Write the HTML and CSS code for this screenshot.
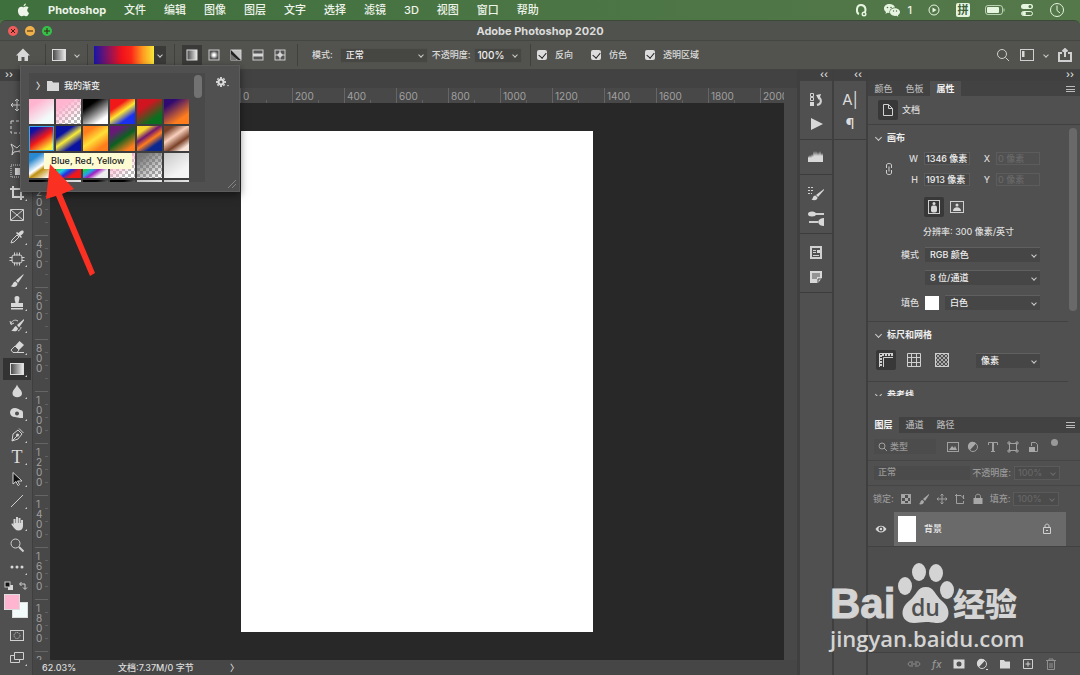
FILE: index.html
```html
<!DOCTYPE html>
<html lang="zh-CN">
<head>
  <meta charset="UTF-8" />
  <meta name="viewport" content="width=device-width, initial-scale=1.0" />
  <title>Adobe Photoshop 2020</title>
  <link rel="stylesheet" href="styles.css">
</head>
<body>
  <!-- macOS menu bar -->
  <nav class="menubar">
    <svg class="apple" viewBox="0 0 14 16"><path d="M9.600 0.500c0.100 1.300-1.100 2.900-2.500 2.900C6.900 2.100 8.200 0.700 9.600 0.500zM7.200 4.500C7.800 4.500 8.700 3.700 10 3.800c1.100 0 2 0.600 2.500 1.300-2.200 1.400-1.800 4.500 0.500 5.500-0.500 1.400-1.700 3.600-3 3.600-1 0-1.400-0.600-2.600-0.600s-1.600 0.600-2.500 0.600C3 14.300 1 11.300 1 8.300c0-2.900 1.900-4.400 3.600-4.400 1.100 0 2 0.600 2.600 0.600z"/></svg>
    <a class="app-name" href="#">Photoshop</a>
    <a href="#">文件</a>
    <a href="#">编辑</a>
    <a href="#">图像</a>
    <a href="#">图层</a>
    <a href="#">文字</a>
    <a href="#">选择</a>
    <a href="#">滤镜</a>
    <a href="#">3D</a>
    <a href="#">视图</a>
    <a href="#">窗口</a>
    <a href="#">帮助</a>
    <div class="status-icons">
      <svg width="14" height="14" viewBox="0 0 14 14"><path class="line thick" d="M5 11C2 10 2 2 7 2s5.500 6 3 8.500"/><circle class="fill" cx="10" cy="11" r="2.500"/><circle cx="10" cy="11" r="1" fill="#4d7445"/></svg>
      <span class="wechat">
        <svg width="18" height="14" viewBox="0 0 18 14"><path class="fill" d="M6.500 1C3.200 1 1 3 1 5.500 1 7 1.800 8.200 3 9l-0.500 1.800L4.700 9.700l1.800 0.200C6 7 8.500 4.500 12 4.500 11.500 2.500 9.300 1 6.500 1z"/><path class="fill" d="M12 5.200c-2.700 0-5 1.700-5 3.900s2.300 3.900 5 3.900l1.500-0.200 1.800 1-0.400-1.600c1.300-0.700 2.100-1.800 2.100-3.100 0-2.200-2.300-3.900-5-3.900z"/><g fill="#4d7445"><circle cx="4.500" cy="4.500" r="0.800"/><circle cx="8" cy="4.500" r="0.800"/><circle cx="10.500" cy="8" r="0.700"/><circle cx="13.500" cy="8" r="0.700"/></g></svg>
        1
      </span>
      <svg width="14" height="14" viewBox="0 0 14 14"><circle class="line" cx="7" cy="7" r="5"/><path class="fill" d="M5.500 4.500v5l4-2.500z"/></svg>
      <span class="ime">拼</span>
      <svg width="20" height="14" viewBox="0 0 20 14"><rect class="line dim" x="0.500" y="2.500" width="17" height="9" rx="2.500"/><rect class="fill" x="2" y="4" width="12" height="6" rx="1"/><path class="line dim" d="M19 5.500v3"/></svg>
      <svg width="14" height="14" viewBox="0 0 14 14"><rect class="fill" x="1" y="1" width="12" height="5" rx="2.500"/><rect class="line" x="1.500" y="8.500" width="11" height="4" rx="2"/><circle cx="10" cy="3.500" r="1.500" fill="#4d7445"/><circle class="fill" cx="4" cy="10.500" r="2"/></svg>
      <svg width="16" height="16" viewBox="0 0 16 16"><circle class="line" cx="8" cy="8" r="6.500"/><path class="line" d="M8 3.500V8.500L11 11"/></svg>
    </div>
  </nav>

  <div class="window">
    <header class="titlebar">
      <div class="lights">
        <button class="light red" aria-label="关闭"><svg viewBox="0 0 10 10"><path d="M3 3l4 4M7 3l-4 4"/></svg></button>
        <button class="light amber" aria-label="最小化"><svg viewBox="0 0 10 10"><path d="M2 5h6"/></svg></button>
        <button class="light green" aria-label="缩放"><svg viewBox="0 0 10 10"><path d="M2 5h6M5 2v6"/></svg></button>
      </div>
      <h1>Adobe Photoshop 2020</h1>
    </header>

    <!-- Options bar -->
    <div class="options">
      <button class="home" aria-label="主页"><svg width="16" height="14" viewBox="0 0 16 14"><path class="fill" d="M8 0.500L1 7.500h2V13h3.500V9h3v4H13V7.500h2z"/></svg></button>
      <div class="opt-group tool-preset">
        <svg width="14" height="12" viewBox="0 0 14 12"><defs><linearGradient id="gr"><stop offset="0" stop-color="#444"/><stop offset="1" stop-color="#eee"/></linearGradient></defs><rect x="0.500" y="0.500" width="13" height="11" fill="url(#gr)" stroke="#ddd"/></svg>
        <i class="chev"></i>
      </div>
      <div class="opt-group ramp-group">
        <button class="ramp" aria-label="渐变"></button>
        <button class="ramp-arrow" aria-label="渐变拾色器"><i class="chev"></i></button>
      </div>
      <div class="opt-group styles">
        <button class="active" aria-label="线性"><svg width="12" height="12" viewBox="0 0 12 12"><rect x="1" y="1" width="10" height="10" fill="url(#gr)" stroke="#ddd"/></svg></button>
        <button aria-label="径向"><svg width="12" height="12" viewBox="0 0 12 12"><defs><radialGradient id="rad"><stop offset="0.200" stop-color="#fff"/><stop offset="0.800" stop-color="#555"/></radialGradient></defs><rect x="1" y="1" width="10" height="10" fill="url(#rad)" stroke="#ccc"/></svg></button>
        <button aria-label="角度"><svg width="12" height="12" viewBox="0 0 12 12"><rect x="1" y="1" width="10" height="10" fill="#888" stroke="#ccc"/><path d="M1 1l5 5v5H1z" fill="#777"/><path d="M1 1l10 10H8L1 5z" fill="#222"/><path class="fill" d="M1 1l10 10V1z" opacity="0.700"/></svg></button>
        <button aria-label="对称"><svg width="12" height="12" viewBox="0 0 12 12"><rect x="1" y="1" width="10" height="10" fill="#555" stroke="#ccc"/><path class="fill" d="M1 4.500h10v3H1z"/></svg></button>
        <button aria-label="菱形"><svg width="12" height="12" viewBox="0 0 12 12"><rect x="1" y="1" width="10" height="10" fill="#555" stroke="#ccc"/><path class="fill" d="M6 3l3 3-3 3-3-3z"/><path class="line" d="M6 1v10M1 6h10"/></svg></button>
      </div>
      <div class="opt-group blend">
        <label for="blend">模式:</label>
        <span class="select w88"><select id="blend"><option>正常</option></select><i class="chev"></i></span>
        <label for="opacity">不透明度:</label>
        <span class="select w46"><input id="opacity" type="text" value="100%"><i class="chev"></i></span>
      </div>
      <div class="opt-group checks">
        <label><input type="checkbox" checked>反向</label>
        <label><input type="checkbox" checked>仿色</label>
        <label><input type="checkbox" checked>透明区域</label>
      </div>
      <div class="opt-right">
        <svg width="14" height="14" viewBox="0 0 14 14"><circle class="line" cx="6" cy="6" r="4.500"/><path class="line" d="M9.500 9.500L13 13"/></svg>
        <svg width="14" height="12" viewBox="0 0 14 12"><rect class="line" x="0.500" y="0.500" width="13" height="11"/><path class="fill" d="M2 2h2.500v6H2z"/></svg>
        <i class="chev"></i>
        <svg width="14" height="14" viewBox="0 0 14 14"><path class="line thick" d="M4 5H1v8h12V5h-3M7 9V1.500M4.500 3.500L7 1l2.500 2.500"/></svg>
      </div>
    </div>

    <main class="workspace">
      <aside class="toolbar">
        <div class="strip left">››</div>
        <div class="tools">
          <button class="tool" aria-label="移动"><svg viewBox="0 0 16 16"><path class="line" d="M8 2v12M2 8h12M6 4l2-2 2 2M6 12l2 2 2-2M4 6L2 8l2 2M12 6l2 2-2 2"/></svg></button>
          <button class="tool" aria-label="选框"><svg viewBox="0 0 16 16"><rect class="line" x="2" y="2" width="12" height="12" stroke-dasharray="3 2"/></svg></button>
          <button class="tool" aria-label="套索"><svg viewBox="0 0 16 16"><path class="line" d="M2 3l6 4 5-5-2 8-6 1-2 3 1-6zM9 10l5 3"/></svg></button>
          <button class="tool" aria-label="对象选择"><svg viewBox="0 0 16 16"><rect class="line" x="2" y="2" width="12" height="12" stroke-dasharray="1 1"/><rect class="fill" x="6" y="5" width="7" height="7"/></svg></button>
          <button class="tool" aria-label="裁剪"><svg viewBox="0 0 16 16"><path class="line thick" d="M4 1v11h11M1 4h11v11"/></svg></button>
          <button class="tool plain" aria-label="图框"><svg viewBox="0 0 16 16"><path class="line" d="M1.500 2.500h13v11h-13zM2 3l12 10M14 3L2 13"/></svg></button>
          <button class="tool" aria-label="吸管"><svg viewBox="0 0 16 16"><path class="line" d="M2 14l1-3 5-5 2 2-5 5z"/><path class="fill" d="M7 4l5 5 1-1-1.500-1.500C16 4 15 1 13 1.500c-1 0-2 1-3.500 2.500L8 3z"/></svg></button>
          <button class="tool" aria-label="修复"><svg viewBox="0 0 16 16"><rect class="line" x="3" y="4" width="10" height="8" rx="2"/><path class="line" d="M5.500 1.500v3M8 1.500v3M10.500 1.500v3M5.500 11.500v3M8 11.500v3M10.500 11.500v3M0.500 6.500h3M0.500 9.500h3M12.500 6.500h3M12.500 9.500h3"/></svg></button>
          <button class="tool" aria-label="画笔"><svg viewBox="0 0 16 16"><path class="fill" d="M14.500 1L7 7.500 9 10l5.500-8zM6.500 8.500c-3 0-2 4-5 4.500 3 2 7 1 7-2.500z"/></svg></button>
          <button class="tool" aria-label="图章"><svg viewBox="0 0 16 16"><path class="fill" d="M8 1C4 1 6 5 6.500 8H2v4h12V8H9.500C10 5 12 1 8 1zM2 13h12v1.500H2z"/></svg></button>
          <button class="tool" aria-label="历史画笔"><svg viewBox="0 0 16 16"><path class="fill" d="M15 2L8 8l2 2.500 5-7zM7 9c-2 0-2 4-5 4.500 3 1.500 6.500 1 7-2z"/><path class="line" d="M2 7c0-3 4-5 7-3M1 4l1 3.500L5 6M12 10c0 2-1 3-3 4"/></svg></button>
          <button class="tool" aria-label="橡皮擦"><svg viewBox="0 0 16 16"><path class="line" d="M2 11l4-4 4 4-2 2.500H4z"/><path class="fill" d="M6 7l4.500-5L15 6l-5 5zM8 13h7v1H8z"/></svg></button>
          <button class="tool active" aria-label="渐变"><svg viewBox="0 0 16 16"><rect x="1.500" y="2.500" width="13" height="11" fill="url(#gr)" stroke="#ddd"/></svg></button>
          <button class="tool" aria-label="模糊"><svg viewBox="0 0 16 16"><path class="fill" d="M8 1.500C7 5 3.500 7 3.500 10.500 3.500 15.500 13 15.500 13 10.500 13 7 9 5 8 1.500z"/></svg></button>
          <button class="tool" aria-label="减淡"><svg viewBox="0 0 16 16"><path class="fill" fill-rule="evenodd" d="M6 3c-3 0-5 2-5 4.500S3 12 6 12l5 1h3V8c0-2-1-3-3-3C10 4 8 3 6 3zM8 6.500a2 2 0 1 1 0 4 2 2 0 0 1 0-4z"/></svg></button>
          <button class="tool" aria-label="钢笔"><svg viewBox="0 0 16 16"><path class="line" d="M3 14l1-7 5-4 4 4-4 5zM3 14l5-5M10 1.500L14.500 6"/><circle class="fill" cx="8.500" cy="8" r="1.500"/></svg></button>
          <button class="tool" aria-label="文字"><span class="type">T</span></button>
          <button class="tool" aria-label="路径选择"><svg viewBox="0 0 16 16"><path d="M4 1.500v11.500l3-2.500 2 4 1.500-1-2-3.500H13z" fill="#111" stroke="#d4d4d4"/></svg></button>
          <button class="tool" aria-label="直线"><svg viewBox="0 0 16 16"><path class="line" d="M2 14L14 2"/></svg></button>
          <button class="tool" aria-label="抓手"><svg viewBox="0 0 16 16"><path class="line thick" d="M5.500 9V4M8 8V2M10.500 8V3M13 9V5"/><path class="fill" d="M4.500 8H14v3c0 3-2 4.500-4.500 4.500-3 0-4-2-7-6C2 8 4 8 5 10z"/></svg></button>
          <button class="tool plain" aria-label="缩放"><svg viewBox="0 0 16 16"><circle class="line" cx="6.500" cy="6.500" r="4.500"/><path class="line thick" d="M10 10L14.500 14.500"/></svg></button>
          <button class="tool" aria-label="更多"><svg viewBox="0 0 16 16"><g class="fill"><circle cx="3" cy="8" r="1.500"/><circle cx="8" cy="8" r="1.500"/><circle cx="13" cy="8" r="1.500"/></g></svg></button>
        </div>
        <div class="mini">
          <svg width="10" height="10" viewBox="0 0 10 10"><rect class="fill" x="4" y="4" width="5" height="5"/><rect x="1" y="1" width="5" height="5" fill="#111" stroke="#ccc"/></svg>
          <svg width="10" height="10" viewBox="0 0 10 10"><path class="line" d="M2 3h5v5M3.500 1L1.500 3l2 2M5 6.500l2 2 2-2"/></svg>
        </div>
        <div class="colors"><button class="fg" aria-label="前景色"></button><button class="bg" aria-label="背景色"></button></div>
        <button class="tool plain" aria-label="快速蒙版"><svg viewBox="0 0 16 16"><rect class="line" x="1.500" y="2.500" width="13" height="10"/><circle class="line" cx="8" cy="7.500" r="3" stroke-dasharray="1 1"/></svg></button>
        <button class="tool" aria-label="屏幕模式"><svg viewBox="0 0 16 16"><path class="line" d="M5.500 2.500h9v7h-9zM5.500 5.500h-4v7h9v-3"/></svg></button>
      </aside>

      <section class="document">
        <div class="doc-strip"></div>
        <div class="ruler-h">
          <span>0</span><span>200</span><span>400</span><span>600</span><span>800</span><span>1000</span><span>1200</span><span>1400</span><span>1600</span><span>1800</span><span>2000</span>
        </div>
        <div class="ruler-v">
          <span>0</span><span>200</span><span>400</span><span>600</span><span>800</span><span>1000</span><span>1200</span><span>1400</span><span>1600</span><span>1800</span><span>2000</span>
        </div>
        <div class="canvas"><div class="artboard"></div></div>
        <footer class="statusbar"><span class="zoom">62.03%</span><span class="doc-info">文档:7.37M/0 字节</span><span class="more">〉</span></footer>
      </section>

      <aside class="dock">
        <div class="strip">‹‹</div>
        <div class="dock-group">
          <button aria-label="历史记录"><svg viewBox="0 0 16 16"><path class="line" d="M2.500 1.500h3v3h-3zM2.500 5.500h3v3h-3z"/><path class="fill" d="M2 10h4v4H2z"/><path class="line thick" d="M9 13c5-1 5-6 1-8"/><path class="fill" d="M8 3l5-1-2 6z"/></svg></button>
          <button aria-label="动作"><svg viewBox="0 0 16 16"><path class="fill" d="M3 2l12 6-12 6z"/></svg></button>
        </div>
        <div class="dock-group one">
          <button aria-label="直方图"><svg viewBox="0 0 16 16"><path class="fill" d="M0 13V7l1 2 1-3 1 3 1-4 1 3 1-6 1 5 1-5 1 5 1-4 1 4 1-5 1 5 1-3 1 3V13z"/></svg></button>
        </div>
        <div class="dock-group">
          <button aria-label="画笔设置"><svg viewBox="0 0 16 16"><path class="line" d="M0 1.500h6M0 4.500h6M0 7.500h4" stroke-dasharray="2 1"/><path class="fill" d="M16 3L8 9l2 2 6-7zM7.500 9.500c-3 0-2 3-4 4 3 1.500 6 0.500 6-2z"/></svg></button>
          <button aria-label="画笔"><svg viewBox="0 0 16 16"><path class="line thick" d="M7 4h9M1 12h9"/><ellipse class="fill" cx="4" cy="4" rx="4" ry="2.500"/><path class="fill" d="M10 12c1-3 3-4 6-4v8c-3 0-5-1-6-4z"/></svg></button>
        </div>
        <div class="dock-group">
          <button aria-label="库"><svg viewBox="0 0 16 16"><rect class="line thick" x="3" y="2" width="10" height="11"/><path class="line" d="M5 5.500h3M5 7.500h3M5 10.500h6"/><path class="fill" d="M9 5h3v3H9z"/></svg></button>
          <button aria-label="注释"><svg viewBox="0 0 16 16"><path class="fill" d="M2 2h12v7l-4 5H2z"/><path d="M4 5h8M4 7h8M4 9h5M10 14V10h4" stroke="#505050" fill="none"/></svg></button>
        </div>
      </aside>
      <aside class="dock">
        <div class="strip">‹‹</div>
        <div class="dock-group">
          <button class="glyph" aria-label="字符">A|</button>
          <button class="glyph" aria-label="段落">¶</button>
        </div>
      </aside>

      <aside class="panels">
        <div class="strip">››</div>
        <div class="tabs">
          <button>颜色</button><button>色板</button><button class="active">属性</button>
          <i class="burger"></i>
        </div>
        <div class="prop-head">
          <span class="icon-btn on"><svg width="12" height="14" viewBox="0 0 12 14"><path class="line" d="M1.500 1.500h5l4 4v7h-9zM6.500 1.500v4h4"/></svg></span>
          文档
        </div>
        <div class="prop-body">
          <section class="section">
            <h2><i class="chev"></i>画布</h2>
            <div class="size">
              <svg class="chain" width="8" height="14" viewBox="0 0 8 14"><path class="line" d="M1.500 6V3c0-2 5-2 5 0v3M1.500 8v3c0 2 5 2 5 0V8M4 4.500v5"/></svg>
              <label for="w">W</label><input id="w" type="text" value="1346 像素">
              <label for="x">X</label><input id="x" type="text" value="0 像素" disabled>
              <label for="h">H</label><input id="h" type="text" value="1913 像素">
              <label for="y">Y</label><input id="y" type="text" value="0 像素" disabled>
            </div>
            <div class="orient">
              <button class="icon-btn on" aria-label="纵向"><svg width="14" height="16" viewBox="0 0 14 16"><rect class="line" x="1.500" y="1.500" width="11" height="13"/><circle class="fill" cx="7" cy="4.500" r="1.500"/><rect class="fill" x="4" y="6.500" width="6" height="7" rx="2"/></svg></button>
              <button class="icon-btn" aria-label="横向"><svg width="14" height="12" viewBox="0 0 14 12"><rect class="line" x="0.500" y="0.500" width="13" height="11"/><circle class="fill" cx="7" cy="4" r="1.500"/><path class="fill" d="M3 10c0-5 8-5 8 0z"/></svg></button>
            </div>
            <p class="res">分辨率: 300 像素/英寸</p>
            <div class="field"><label for="mode">模式</label><span class="select"><select id="mode"><option>RGB 颜色</option></select><i class="chev"></i></span></div>
            <div class="field"><label for="depth"></label><span class="select"><select id="depth"><option>8 位/通道</option></select><i class="chev"></i></span></div>
            <div class="field last"><label for="fill">填色</label><i class="chip"></i><span class="select"><select id="fill"><option>白色</option></select><i class="chev"></i></span></div>
          </section>
          <section class="section">
            <h2><i class="chev"></i>标尺和网格</h2>
            <div class="grid-row">
              <button class="icon-btn on" aria-label="标尺"><svg width="14" height="14" viewBox="0 0 14 14"><path class="line thick" d="M2 13V2h12" stroke-dasharray="2 1"/><path class="line" d="M0.500 14V0.500H14M4.500 14V4.500H14"/></svg></button>
              <button class="icon-btn" aria-label="网格"><svg width="14" height="14" viewBox="0 0 14 14"><path class="line" d="M0.500 0.500h13v13H0.500zM4.500 0v14M9.500 0v14M0 4.500h14M0 9.500h14"/></svg></button>
              <button class="icon-btn" aria-label="透明"><svg width="14" height="14" viewBox="0 0 14 14"><path class="line dim" d="M1 5l4-4M1 9l8-8M1 13L13 1M5 13l8-8M9 13l4-4M9 1l4 4M5 1l8 8M1 1l12 12M1 5l8 8M1 9l4 4"/><rect class="line" x="0.500" y="0.500" width="13" height="13"/></svg></button>
              <span class="select w64"><select aria-label="单位"><option>像素</option></select><i class="chev"></i></span>
            </div>
          </section>
          <section class="section">
            <h2><i class="chev"></i>参考线</h2>
          </section>
          <i class="scroll-thumb"></i>
        </div>

        <div class="tabs layer-tabs">
          <button class="active">图层</button><button>通道</button><button>路径</button>
          <i class="burger"></i>
        </div>
        <div class="layer-row">
          <span class="search"><svg width="10" height="10" viewBox="0 0 10 10"><circle class="line" cx="4" cy="4" r="3"/><path class="line" d="M6 6l3 3"/></svg>类型</span>
          <div class="filters">
            <svg width="12" height="12" viewBox="0 0 12 12"><rect class="line" x="0.500" y="1.500" width="11" height="9"/><path class="fill" d="M2 9l3-4 2 2 1-2 2 4z"/></svg>
            <svg width="12" height="12" viewBox="0 0 12 12"><circle class="line" cx="6" cy="6" r="4.500"/><path class="fill" d="M9 2.500A4.500 4.500 0 1 0 3 9z"/></svg>
            <svg width="12" height="12" viewBox="0 0 12 12"><path class="line" d="M1.500 4V1.500h9V4M4 10.500h4"/><path class="line thick" d="M6 1.500v9"/></svg>
            <svg width="12" height="12" viewBox="0 0 12 12"><rect class="line" x="2.500" y="2.500" width="7" height="7"/><path class="line" d="M1 1h2v2H1zM9 1h2v2H9zM1 9h2v2H1zM9 9h2v2H9z"/></svg>
            <svg width="12" height="12" viewBox="0 0 12 12"><path class="line" d="M4.500 5V1.500h4l2 2v7H8"/><path class="fill" d="M2 6h6v5H2z"/></svg>
          </div>
          <i class="dot"></i>
        </div>
        <div class="layer-row">
          <span class="dim-field grow">正常</span><span>不透明度:</span><span class="dim-field pct">100%<i class="chev"></i></span>
        </div>
        <div class="layer-row locks">
          <span>锁定:</span>
          <svg width="12" height="12" viewBox="0 0 12 12"><rect class="line" x="1.500" y="1.500" width="9" height="9"/><path class="fill" d="M2 2h3v3H2zM8 2h2v3H8zM5 5h3v3H5zM2 8h3v2H2zM8 8h2v2H8z"/></svg>
          <svg width="12" height="12" viewBox="0 0 12 12"><path class="fill" d="M11 1L5 6l2 2 4-6zM4.500 7C2 7 3 10 1 11c2 1 5 0 5-2.500z"/></svg>
          <svg width="12" height="12" viewBox="0 0 12 12"><path class="line" d="M6 1v10M1 6h10M4.500 2.500L6 1l1.500 1.500M4.500 9.500L6 11l1.500-1.500M2.500 4.500L1 6l1.500 1.500M9.500 4.500L11 6 9.500 7.500"/></svg>
          <svg width="12" height="12" viewBox="0 0 12 12"><path class="line" d="M2.500 1v9.500h7V8M1 2.500h6l3 3M9.500 2v4"/></svg>
          <svg width="12" height="12" viewBox="0 0 12 12"><path class="fill" d="M1.500 5h9v6h-9z"/><path class="line" d="M3.500 5V3.500c0-3 5-3 5 0V5"/></svg>
          <span>填充:</span><span class="dim-field pct">100%<i class="chev"></i></span>
        </div>
        <div class="layer">
          <svg class="eye" width="12" height="10" viewBox="0 0 12 10"><path class="fill" fill-rule="evenodd" d="M0.500 5C3 0.500 9 0.500 11.500 5 9 9.500 3 9.500 0.500 5zM6 2.500a2.500 2.500 0 1 0 0 5 2.500 2.500 0 0 0 0-5z"/><circle class="fill" cx="6" cy="5" r="1.200"/></svg>
          <div class="layer-main">
            <i class="thumb"></i>背景
            <svg class="lock" width="10" height="12" viewBox="0 0 10 12"><path class="line" d="M1.500 4.500h7v6h-7zM3 4.500V3c0-2.500 4-2.500 4 0v1.500M4 7.500h2"/></svg>
          </div>
        </div>
        <div class="layer-empty"></div>
        <div class="layer-foot">
          <svg class="off" width="14" height="12" viewBox="0 0 14 12"><path class="line" d="M6 4H3.500c-3 0-3 4 0 4H6M8 4h2.500c3 0 3 4 0 4H8M4 6h6"/></svg>
          <em class="off">fx</em>
          <svg width="12" height="12" viewBox="0 0 12 12"><path class="fill" fill-rule="evenodd" d="M0.500 1.500h11v9H0.500zM6 3.500a2.500 2.500 0 1 0 0 5 2.500 2.500 0 0 0 0-5z"/></svg>
          <svg width="12" height="12" viewBox="0 0 12 12"><circle class="line" cx="6" cy="6" r="4.500"/><path class="fill" d="M9 2.500A4.500 4.500 0 1 0 3 9zM10 11h2v1h-2z"/></svg>
          <svg width="12" height="12" viewBox="0 0 12 12"><path class="fill" d="M1 2h4l1 1.500h5v7H1z"/></svg>
          <svg width="12" height="12" viewBox="0 0 12 12"><path class="line" d="M1.500 1.500h9v9h-9zM6 3.500v5M3.500 6h5"/></svg>
          <svg class="off" width="12" height="12" viewBox="0 0 12 12"><path class="line" d="M1 2.500h10M4 2V1h4v1M2.500 3v8.500h7V3M5 5v5M7 5v5"/></svg>
        </div>
      </aside>
    </main>
  </div>

  <!-- Gradient picker -->
  <div class="picker">
    <div class="picker-list">
      <div class="folder">
        <span class="caret">〉</span>
        <svg width="12" height="10" viewBox="0 0 12 10"><path class="fill" d="M0 0h5l1 1.500h6V10H0z"/></svg>
        我的渐变
      </div>
      <div class="swatches">
        <button class="g1"></button><button class="g2"></button><button class="g3"></button><button class="g4"></button><button class="g5"></button><button class="g6"></button>
        <button class="g7 chosen"></button><button class="g8"></button><button class="g9"></button><button class="g10"></button><button class="g11"></button><button class="g12"></button>
        <button class="g13"></button><button class="g14"></button><button class="g15"></button><button class="g2"></button><button class="g16"></button><button class="g17"></button>
        <button class="g3"></button><button class="g17"></button><button class="g3"></button><button class="g3"></button><button class="g17"></button><button class="g17"></button>
      </div>
      <i class="picker-thumb"></i>
    </div>
    <button class="gear" aria-label="设置"><svg width="14" height="12" viewBox="0 0 14 12"><circle cx="6" cy="6" r="2.500" fill="none" stroke="#ddd" stroke-width="2"/><path class="line thick" d="M6 1v2M6 9v2M1 6h2M9 6h2M2.500 2.500l1 1M8.500 8.500l1 1M9.500 2.500l-1 1M3.500 8.500l-1 1"/><path class="fill" d="M12 9h2l-1 1.500z"/></svg></button>
    <svg class="grip" width="10" height="10" viewBox="0 0 10 10"><path class="line" d="M1 9l8-8M5 9l4-4"/></svg>
    <div class="tooltip">Blue, Red, Yellow</div>
    <svg class="pointer" width="50" height="112" viewBox="0 0 50 112"><path d="M4 0L28 25 16 30 49 109 44 112 10 32 0 35z" fill="#fa3022"/></svg>
  </div>

  <div class="watermark">
    <div class="brand">
      <span class="bai">Bai</span>
      <span class="paw">
        <svg width="58" height="62" viewBox="0 0 58 62"><ellipse cx="8" cy="24" rx="7" ry="9"/><ellipse cx="22" cy="10" rx="7" ry="9"/><ellipse cx="39" cy="11" rx="7" ry="9"/><ellipse cx="50" cy="28" rx="7" ry="9"/><path d="M29 25c8 0 9 8 16 14 11 9 7 22-4 22-6 0-7-1-12-1s-7 1-12 1C5 61 1 48 12 39c8-6 8-14 17-14z"/></svg>
        <b>du</b>
      </span>
      <span class="jy">经验</span>
    </div>
    <div class="url">jingyan.baidu.com</div>
  </div>
</body>
</html>
```
FILE: styles.css
```css
* { margin: 0; padding: 0; box-sizing: border-box; }

body {
  height: 100vh;
  display: flex;
  flex-direction: column;
  overflow: hidden;
  position: relative;
  background: #4d7445;
  color: #dcdcdc;
  font: 500 9px/12px Inter, "Noto Sans CJK SC", sans-serif;
}

button, input, select {
  font: inherit;
  color: inherit;
  background: none;
  border: none;
  border-radius: 0;
  appearance: none;
  outline: none;
}

a { color: inherit; text-decoration: none; }
svg { display: block; flex: none; }
.fill { fill: #d8d8d8; }
.line { fill: none; stroke: #d0d0d0; stroke-width: 1; }
.thick { stroke-width: 2; }
.dim { opacity: 0.7; }

.chev {
  flex: none;
  width: 4px;
  height: 4px;
  border: solid #ccc;
  border-width: 0 1px 1px 0;
  transform: rotate(45deg);
}

/* menu bar */
.menubar {
  flex: none;
  height: 20px;
  padding: 0 15px 0 17px;
  display: flex;
  align-items: center;
  gap: 18px;
  background: linear-gradient(90deg, #3e703d, #4b7545 50%, #55784a);
  color: #eef4ea;
  font-size: 11px;
  white-space: nowrap;
}
.menubar .fill { fill: #e6f5e0; }
.menubar .line { stroke: #e6f5e0; }
.apple { width: 13px; height: 15px; fill: #eef4ea; }
.menubar .app-name { font-weight: 700; width: 58px; }
.status-icons { margin-left: auto; display: flex; align-items: center; gap: 15px; }
.wechat { display: flex; align-items: center; gap: 6px; }
.ime {
  width: 14px; height: 14px; line-height: 14px;
  background: #e6f5e0; color: #3d6038;
  border-radius: 2px; text-align: center; font-weight: 700;
}

.window {
  flex: 1;
  min-height: 0;
  display: flex;
  flex-direction: column;
  background: #505050;
  border-radius: 6px 6px 0 0;
  border-top: 1px solid #3a4a36;
}

.titlebar {
  flex: none;
  height: 20px;
  display: flex;
  align-items: center;
  padding: 0 8px;
  background: #50534d;
  border-bottom: 1px solid #444742;
  border-radius: 6px 6px 0 0;
}
.titlebar h1 { flex: 1; text-align: center; font-size: 11px; font-weight: 700; }
.lights { display: flex; gap: 7px; width: 0; }
.light { flex: none; width: 10px; height: 10px; border-radius: 50%; }
.light svg { width: 10px; height: 10px; fill: none; stroke: #3a2010; }
.red { background: #f05b5b; }
.amber { background: #f0b04a; }
.green { background: #35c04a; }

/* options bar */
.options {
  flex: none;
  height: 29px;
  display: flex;
  align-items: center;
  background: #52534e;
  border-bottom: 1px solid #434441;
  white-space: nowrap;
}
.home { width: 45px; padding-left: 15px; }
.opt-group {
  height: 22px;
  display: flex;
  align-items: center;
  border-left: 1px solid #40413d;
}
.tool-preset { width: 42px; padding-left: 6px; gap: 9px; }
.ramp-group { width: 87px; padding-left: 6px; }
.ramp { width: 60px; height: 18px; background: linear-gradient(90deg, #1715a8, #f0121c 46%, #fb2818 62%, #ff9d20 82%, #f8e838); }
.ramp-arrow { width: 12px; height: 18px; padding-left: 4px; background: #3a3b38; }
.ramp-arrow .chev { display: block; }
.styles { width: 123px; padding-left: 7px; gap: 2px; }
.styles button { width: 20px; height: 20px; padding: 4px; }
.styles .active { background: #3a3b38; }
.blend { width: 233px; padding-left: 14px; gap: 4px; }
.blend .w88 { margin-left: 3px; }

.select {
  display: flex;
  align-items: center;
  height: 15px;
  flex: 1;
  background: #464646;
  border-top: 1px solid #606060;
  padding-right: 4px;
}
.select select, .select input { flex: 1; min-width: 0; width: 0; height: 14px; padding-left: 5px; color: #eee; }
.options .select { background: #464743; border: 1px solid #50514d; }
.w88 { flex: 0 0 88px; }
.w46 { flex: 0 0 48px; }
.w64 { flex: 0 0 64px; margin-left: auto; }
.options .w46 input { padding-left: 2px; font-size: 10px; }

.checks { padding-left: 6px; gap: 18px; }
.checks label { display: flex; align-items: center; gap: 8px; }
.checks input { width: 10px; height: 10px; background: #dcdcdc; border-radius: 2px; position: relative; }
.checks input:checked::after {
  content: "";
  position: absolute;
  left: 3px;
  top: 1px;
  width: 4px;
  height: 6px;
  border: solid #222;
  border-width: 0 1px 1px 0;
  transform: rotate(40deg);
}
.opt-right { margin-left: auto; padding-right: 8px; display: flex; align-items: center; gap: 10px; }

/* workspace */
.workspace { flex: 1; min-height: 0; display: flex; background: #3f3f3f; }
.strip {
  flex: none;
  height: 11px;
  padding-right: 6px;
  background: #404040;
  text-align: right;
  font-size: 10px;
  line-height: 8px;
}
.strip.left { text-align: left; padding-left: 5px; }

.toolbar { flex: none; width: 32px; background: #505050; }
.tools { padding-top: 13px; }
.tool {
  width: 28px;
  height: 22px;
  margin-left: 3px;
  padding: 3px 6px;
  display: block;
  position: relative;
}
.tool svg { width: 16px; height: 16px; }
.tool::after {
  content: "";
  position: absolute;
  right: 4px;
  bottom: 3px;
  border: 1px solid #ccc;
  border-color: transparent #ccc #ccc transparent;
}
.tool.plain::after { display: none; }
.tool.active { background: #333; }
.type { display: block; font: 18px/16px "Liberation Serif", serif; }
.mini { display: flex; gap: 4px; padding: 3px 4px; }
.colors { position: relative; height: 26px; margin: 0 4px 5px; }
.colors button { position: absolute; width: 16px; height: 16px; border: 1px solid #ddd; }
.colors .fg { left: 0; top: 0; background: #ffb4cf; z-index: 1; }
.colors .bg { left: 8px; top: 8px; background: #f2fbfa; }

.document {
  flex: 1;
  min-width: 0;
  margin: 0 3px 0 1px;
  display: grid;
  grid-template: 18px 15px minmax(0, 1fr) 15px / 17px minmax(0, 1fr) 13px;
  background: #484848;
}
.doc-strip { grid-column: 1 / -1; background: #424242; }
.ruler-h {
  grid-column: 2;
  padding-left: 190px;
  display: flex;
  overflow: hidden;
  color: #a0a0a0;
  font-size: 10px;
  font-weight: 400;
  line-height: 17px;
}
.ruler-h span {
  flex: 0 0 52px;
  padding-left: 2px;
  border-left: 1px solid #656565;
  background: repeating-linear-gradient(90deg, transparent 0 25px, #606060 25px 26px) bottom / 100% 3px no-repeat;
}
.ruler-v {
  grid-column: 1;
  grid-row: 3;
  padding-top: 28px;
  overflow: hidden;
  color: #a0a0a0;
  font-size: 10px;
  font-weight: 400;
  line-height: 10px;
}
.ruler-v span {
  display: block;
  height: 52px;
  width: 13px;
  margin-left: 2px;
  padding: 3px 4px 0 1px;
  border-top: 1px solid #656565;
  overflow-wrap: anywhere;
  background: repeating-linear-gradient(transparent 0 12px, #606060 12px 13px) right / 3px 100% no-repeat;
}
.canvas { grid-column: 2; grid-row: 3; background: #282828; overflow: hidden; padding: 28px 0 0 191px; }
.artboard { width: 352px; height: 501px; background: #fff; }
.statusbar {
  grid-column: 1 / -1;
  grid-row: 4;
  display: flex;
  align-items: center;
  padding-left: 9px;
  background: #464646;
}
.zoom { width: 76px; }
.doc-info { width: 112px; }

.dock { flex: none; width: 32px; margin-right: 2px; background: #505050; }
.dock .strip { padding-right: 4px; }
.dock-group { padding: 7px 0 3px; border-bottom: 1px solid #3c3c3c; }
.dock-group.one { padding: 5px 0; }
.dock-group button { display: block; width: 32px; height: 24px; padding: 4px 8px; }
.dock-group svg { width: 16px; height: 16px; }
.dock-group .glyph { padding: 0; font-size: 15px; font-weight: 400; }

/* panels */
.panels { flex: none; width: 212px; display: flex; flex-direction: column; background: #505050; }
.tabs { flex: none; height: 15px; display: flex; background: #424242; color: #b4b4b4; }
.tabs button { width: 31px; }
.tabs .active { background: #505050; color: #f4f4f4; font-weight: 700; }
.burger { width: 9px; height: 6px; margin: 5px 5px 0 auto; border: solid #bbb; border-width: 1px 0; background: linear-gradient(#bbb, #bbb) center / 100% 1px no-repeat; }
.prop-head {
  flex: none;
  height: 29px;
  padding-left: 10px;
  display: flex;
  align-items: center;
  gap: 4px;
  border-bottom: 1px solid #414141;
}
.icon-btn { width: 20px; height: 20px; display: flex; align-items: center; justify-content: center; }
.icon-btn.on { background: #383838; border-radius: 2px; }
.prop-body { flex: none; height: 271px; overflow: hidden; position: relative; padding-right: 12px; }
.section { border-bottom: 1px solid #424242; padding: 7px 28px 11px 8px; }
.section:last-of-type { border-bottom: none; }
.section h2 { font-size: 9px; line-height: 12px; display: flex; align-items: center; gap: 6px; color: #eee; }
.section h2 .chev { margin-bottom: 2px; width: 5px; height: 5px; }
.size {
  display: grid;
  grid-template-columns: 22px 12px 46px 14px 44px;
  gap: 8px 6px;
  justify-content: end;
  align-items: center;
  margin: 8px 0 11px;
}
.size .chain { grid-row: 1 / 3; justify-self: center; }
.size label { text-align: right; }
.size input { width: 100%; height: 13px; padding-left: 1px; background: #484848; border: 1px solid #5c5c5c; color: #eee; font-size: 9px; }
.size input:disabled { color: #686868; background: none; }
.orient { display: flex; gap: 3px; padding-left: 48px; }
.res { padding: 9px 0 9px 47px; }
.field { display: flex; align-items: center; gap: 6px; margin-bottom: 8px; }
.field label { width: 43px; text-align: right; }
.field.last { margin: 10px 0 0; }
.chip { width: 14px; height: 14px; background: #fff; }
.grid-row { display: flex; gap: 8px; align-items: center; margin-top: 9px; }
.scroll-thumb { position: absolute; right: 3px; top: 3px; width: 8px; height: 183px; border-radius: 4px; background: #696969; }

.layer-tabs { margin-top: 21px; height: 16px; }
.layer-row {
  flex: none;
  height: 25px;
  display: flex;
  align-items: center;
  padding: 0 20px 0 6px;
  color: #999;
  border-bottom: 1px solid #454545;
  white-space: nowrap;
}
.layer-row .fill { fill: #a8a8a8; }
.layer-row .line { stroke: #a0a0a0; }
.search { display: flex; gap: 2px; align-items: center; width: 62px; height: 15px; padding-left: 4px; background: #4c4c4c; }
.filters { display: flex; gap: 8px; margin-left: 11px; }
.layer-tabs + .layer-row { height: 28px; }
.dot { width: 7px; height: 7px; margin: 0 0 8px 12px; border-radius: 50%; background: #999; }
.dim-field { height: 14px; padding-left: 4px; background: #4b4b4b; }
.dim-field.grow { flex: 1; margin-right: 2px; }
.dim-field.pct { display: flex; align-items: center; justify-content: space-between; width: 46px; margin-left: 3px; padding: 0 4px 0 3px; color: #666; border: 1px solid #5a5a5a; }
.pct .chev { border-color: #6c6c6c; }
.locks { gap: 6px; padding-left: 5px; border: none; }
.locks .pct { margin-left: -3px; }
.layer { flex: none; display: flex; align-items: center; height: 36px; border-bottom: 1px solid #424242; }
.eye { margin: 0 7px; }
.layer-main { flex: 1; height: 34px; margin-right: 14px; padding: 0 14px 0 4px; display: flex; align-items: center; gap: 8px; background: #6a6a6a; color: #f0f0f0; }
.thumb { width: 18px; height: 26px; background: #fff; }
.lock { margin-left: auto; }
.layer-empty { flex: 1; background: #4d4d4d; }
.layer-foot {
  flex: none;
  height: 23px;
  padding: 0 23px 0 39px;
  display: flex;
  align-items: center;
  justify-content: space-between;
  border-top: 1px solid #414141;
}
.off { opacity: 0.5; font-size: 10px; }

/* gradient picker */
.picker {
  position: absolute;
  left: 20px;
  top: 65px;
  width: 220px;
  height: 127px;
  padding: 7px 8px;
  background: #505050;
  border: 1px solid #5c5c5c;
  box-shadow: 0 3px 8px rgba(0, 0, 0, 0.5);
}
.picker-list { position: relative; width: 176px; height: 109px; overflow: hidden; background: #494949; }
.folder { display: flex; align-items: center; gap: 5px; height: 26px; padding-left: 7px; color: #eee; }
.caret { width: 6px; }
.swatches { display: grid; grid-template-columns: repeat(6, 25px); gap: 2px; background: #3e3e3e; width: 160px; }
.swatches button { height: 25px; }
.swatches .chosen { border: 1px solid #38a8f0; }
.picker-thumb { position: absolute; right: 3px; top: 2px; width: 8px; height: 23px; border-radius: 4px; background: #727272; }
.gear { position: absolute; right: 10px; top: 10px; }
.grip { position: absolute; right: 2px; bottom: 2px; opacity: 0.4; }
.tooltip {
  position: absolute;
  left: 23px;
  top: 87px;
  padding: 2px 7px;
  background: #fdfbd2;
  color: #222;
  font-size: 9px;
  font-weight: 500;
  line-height: 12px;
  white-space: nowrap;
}
.pointer { position: absolute; left: 25px; top: 98px; }

.g1 { background: linear-gradient(145deg, #ffb4cf 20%, #f2fbfa 75%); }
.g2 { background: linear-gradient(145deg, #ffb4cf 25%, transparent 80%), repeating-conic-gradient(#bbb 0 25%, #fff 0 50%) 0 0 / 6px 6px; }
.g3 { background: linear-gradient(145deg, #000 25%, #fff 80%); }
.g4 { background: linear-gradient(145deg, #f01818 28%, #ffe830 50%, #1a30f0 75%); }
.g5 { background: linear-gradient(145deg, #d01420 30%, #0a7020 75%); }
.g6 { background: linear-gradient(145deg, #300a70 20%, #ff7d1c 75%); }
.g7 { background: linear-gradient(145deg, #0a12a8 15%, #f01818 50%, #ffe830 85%); }
.g8 { background: linear-gradient(145deg, #0a12a0 28%, #f8ec38 50%, #0a12a0 75%); }
.g9 { background: linear-gradient(145deg, #ff7d1c 20%, #ffe038 50%, #ff7d1c 80%); }
.g10 { background: linear-gradient(145deg, #6a1878 20%, #0c6020 50%, #ff7d1c 85%); }
.g11 { background: linear-gradient(145deg, #f8d830 20%, #701870 38%, #ff7d1c 55%, #0a2890 75%); }
.g12 { background: linear-gradient(145deg, #7a4028 15%, #f8d0bc 40%, #7a4028 65%, #f8e4d8 85%); }
.g13 { background: linear-gradient(145deg, #2888d0 20%, #fff 50%, #c09010 60%, #fff 90%); }
.g14 { background: linear-gradient(145deg, #f02020, #ff0 25%, #20d040 40%, #20c8e8 52%, #2030e0 65%, #f01818 80%); }
.g15 { background: linear-gradient(145deg, #eee 15%, #ff0 30%, #20d040 42%, #20a8e8 55%, #a020c0 65%, #eee 80%); }
.g16 { background: linear-gradient(145deg, #777 15%, transparent 95%), repeating-conic-gradient(#aaa 0 25%, #fff 0 50%) 0 0 / 6px 6px; }
.g17 { background: linear-gradient(145deg, #c8c8c8, #f4f4f4 70%); }

/* watermark */
.watermark { position: absolute; right: 58px; bottom: 23px; width: 192px; color: #d4d4d4; }
.brand { display: flex; align-items: flex-end; height: 63px; }
.bai { width: 67px; font: 700 42px/40px "Liberation Sans", sans-serif; -webkit-text-stroke: 1px #d4d4d4; }
.paw { position: relative; width: 56px; }
.paw svg { fill: #d4d4d4; }
.paw b { position: absolute; left: 14px; top: 34px; color: #505050; font: 600 23px/23px "Open Sans", sans-serif; }
.jy { font: 900 32px/38px "Noto Sans CJK SC", sans-serif; white-space: nowrap; margin-bottom: 3px; }
.url { font: 600 22px/28px "Open Sans", sans-serif; }
```
